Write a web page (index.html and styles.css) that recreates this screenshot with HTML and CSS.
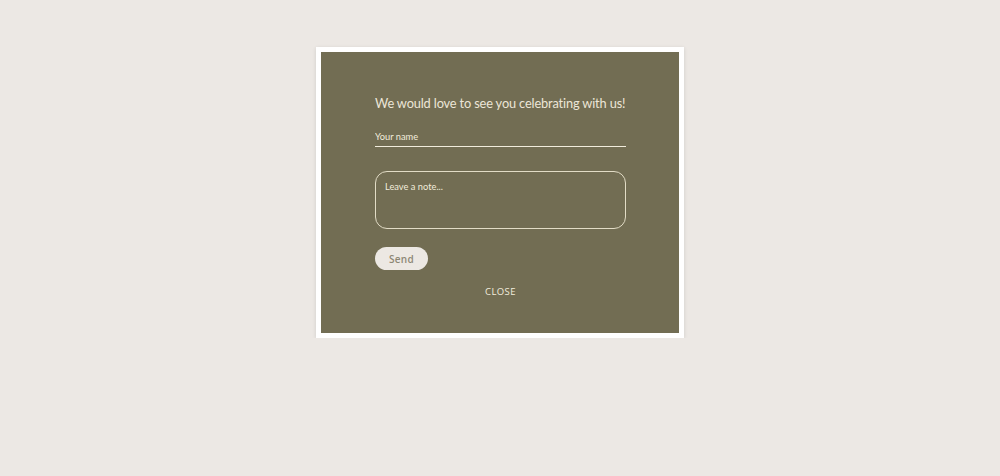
FILE: index.html
```html
<!DOCTYPE html>
<html lang="en">
<head>
  <meta charset="UTF-8" />
  <title>Celebrate with us</title>
  <link rel="stylesheet" href="styles.css">
</head>
<body>

  <!-- RSVP note dialog -->
  <div class="dialog">
    <div class="dialog-inner">
      <form class="note-form">
        <h2 class="note-title">We would love to see you celebrating with us!</h2>
        <input class="name-input" type="text" placeholder="Your name" />
        <textarea class="note-input" placeholder="Leave a note..."></textarea>
        <button class="send-btn" type="button">Send</button>
      </form>
      <button class="close-btn" type="button">CLOSE</button>
    </div>
  </div>

</body>
</html>
```

FILE: styles.css
```css
/* Basic page styling */
* {
  box-sizing: border-box;
  margin: 0;
  padding: 0;
}
body {
  background: #ece8e4;
  font-family: Lato, "Open Sans", sans-serif;
  display: flex;
  justify-content: center;
  padding-top: 47px;
}

/* ============================================================
   Dialog frame
   ============================================================ */
.dialog {
  width: 368px;
  background: #fff;
  padding: 5px;
  box-shadow: 0 1px 4px rgba(0, 0, 0, 0.12);
}
.dialog-inner {
  background: #726d53;
  height: 281px;
  padding: 43px 53px 0 54px;
  display: flex;
  flex-direction: column;
  align-items: center;
}

/* ============================================================
   Form
   ============================================================ */
.note-form {
  width: 100%;
  display: flex;
  flex-direction: column;
  align-items: flex-start;
}
.note-title {
  font-family: Lato, sans-serif;
  font-weight: 400;
  font-size: 12.8px;
  letter-spacing: -0.15px;
  color: #ece6d8;
  white-space: nowrap;
  line-height: 16px;
  margin-bottom: 20px;
}
.name-input {
  width: 100%;
  background: transparent;
  border: none;
  border-bottom: 1px solid #f1ecdc;
  color: #f1ecdc;
  font-family: Lato, sans-serif;
  font-size: 9.3px;
  padding: 0 0 5px 0;
  height: 16px;
  outline: none;
}
.name-input::placeholder {
  color: #f1ecdc;
}
.note-input {
  margin-top: 24px;
  width: 100%;
  height: 58px;
  background: transparent;
  border: 1px solid #e2dcc6;
  border-radius: 12px;
  color: #f1ecdc;
  font-family: Lato, sans-serif;
  font-size: 9.3px;
  padding: 9px 9px;
  resize: none;
  outline: none;
}
.note-input::placeholder {
  color: #f1ecdc;
}
.send-btn {
  margin-top: 18px;
  width: 53px;
  height: 23px;
  border: none;
  border-radius: 12px;
  background: #ece8e3;
  color: #8c8775;
  font-family: "Open Sans", sans-serif;
  font-weight: 600;
  font-size: 10px;
  letter-spacing: 0.3px;
  cursor: pointer;
}
.close-btn {
  margin-top: 15px;
  background: transparent;
  border: none;
  color: #f1ecdc;
  font-family: "Open Sans", sans-serif;
  font-size: 9.5px;
  letter-spacing: 0.4px;
  cursor: pointer;
}
```
